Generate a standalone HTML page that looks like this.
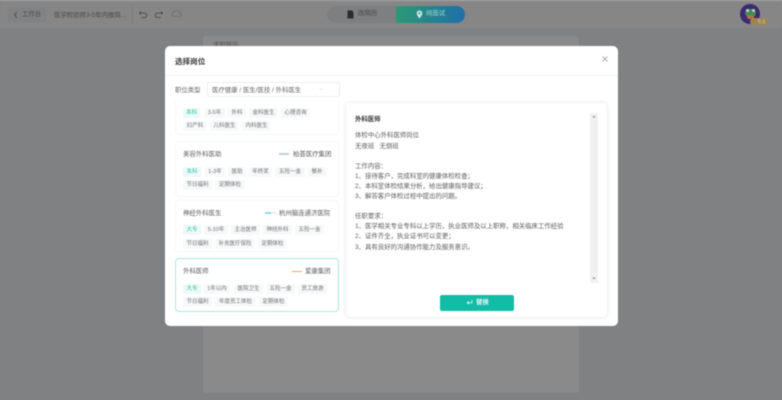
<!DOCTYPE html>
<html lang="zh">
<head>
<meta charset="utf-8">
<title>选择岗位</title>
<style>
*{margin:0;padding:0;box-sizing:border-box}
html,body{width:782px;height:400px;overflow:hidden;background:#808183}
body{position:relative;font-family:"Liberation Sans","Noto Sans CJK SC",sans-serif}
#w{position:absolute;inset:0;filter:blur(.4px)}
#w div,#w span,#w i,#w svg{position:absolute;display:block;white-space:nowrap;font-style:normal}
.tag{height:10px;line-height:11.500px;background:#f7f8f9;color:#707070;font-size:5.500px;text-align:center;border-radius:1.500px}
.g{background:#edf9f7;color:#2cc0ae}
.card{left:175px;width:164px;background:#fff;border:1px solid #f5f6f7;border-radius:4px}
.t{left:183px;font-size:6.400px;line-height:10px;color:#5c5c5c;margin-top:1px}
.co{font-size:6.400px;line-height:10px;color:#5c5c5c;margin-top:1px}
.l{left:355px;font-size:6.420px;line-height:10px;color:#5c5c5c;margin-top:1px}
</style>
</head>
<body>
<div id="w">
  <!-- top bar -->
  <div style="left:0;top:0;width:782px;height:1px;background:#a8a8a8"></div>
  <div style="left:0;top:1px;width:782px;height:27px;background:#868686"></div>
  <div style="left:8px;top:8px;width:38px;height:14px;background:#808283;border-radius:2px"></div>
  <svg style="left:13px;top:11px" width="5" height="8" viewBox="0 0 5 8"><path d="M4 1 1.500 4 4 7" fill="none" stroke="#444" stroke-width=".8"/></svg>
  <span style="left:22px;top:10px;font-size:6.400px;line-height:10px;color:#4a4a4a">工作台</span>
  <span style="left:54px;top:11px;font-size:6.400px;line-height:10px;color:#4a4a4a">医学检验师3-5年内推简...</span>
  <div style="left:132px;top:6px;width:1px;height:17px;background:#7a7a7a"></div>
  <svg style="left:138px;top:10px" width="10" height="9" viewBox="0 0 10 9"><path d="M3 1.500 1.500 3 3 4.500M1.500 3H6.500a2 2 0 0 1 0 4.500H3" fill="none" stroke="#444" stroke-width=".8"/></svg>
  <svg style="left:154px;top:10px" width="10" height="9" viewBox="0 0 10 9"><path d="M7 1.500 8.500 3 7 4.500M8.500 3H3.500a2 2 0 0 0 0 4.500H7" fill="none" stroke="#444" stroke-width=".8"/></svg>
  <svg style="left:171px;top:9px" width="11" height="10" viewBox="0 0 11 10"><path d="M3 7.500a2 2 0 0 1-.3-4A3 3 0 0 1 8.400 3.700 1.900 1.900 0 0 1 8.200 7.500H3Z" fill="none" stroke="#6a6a6a" stroke-width=".8"/></svg>

  <!-- switcher -->
  <div style="left:327px;top:6px;width:72px;height:17px;background:#7e7f81;border-radius:9px 0 0 9px"></div>
  <div style="left:396px;top:6px;width:69px;height:17px;background:linear-gradient(90deg,#2b9a74,#1f6eaa);border-radius:0 9px 9px 0"></div>
  <svg style="left:347px;top:10px" width="7" height="9" viewBox="0 0 7 9"><path d="M.5.500H5L6.500 2V8.500H.5Z" fill="#2c2c2c"/></svg>
  <span style="left:358px;top:9px;font-size:6.400px;line-height:10px;color:#444">改简历</span>
  <svg style="left:416px;top:10px" width="7" height="9" viewBox="0 0 7 9"><path d="M3.500.5A2.800 2.800 0 0 0 .7 3.300C.7 5.200 3.500 8.500 3.500 8.500S6.300 5.200 6.300 3.300A2.800 2.800 0 0 0 3.500.5Z" fill="#cfe8e4"/><circle cx="3.500" cy="3.300" r="1" fill="#2b8c84"/></svg>
  <span style="left:426px;top:9px;font-size:6.400px;line-height:10px;color:#9fd4cf">纯面试</span>

  <!-- avatar -->
  <div style="left:740px;top:4px;width:20px;height:20px;border-radius:50%;background:#3a2a74"></div>
  <div style="left:745px;top:9px;width:11px;height:8px;border-radius:4px;background:#3f8a5c"></div>
  <div style="left:746px;top:9px;width:3px;height:3px;border-radius:50%;background:#c8d8b0"></div>
  <div style="left:752px;top:9px;width:3px;height:3px;border-radius:50%;background:#c8d8b0"></div>
  <div style="left:747px;top:15px;width:7px;height:4px;border-radius:2px;background:#b4703a"></div>
  <div style="left:750px;top:18px;width:18px;height:7px;border-radius:4px;background:#9c8450"></div>
  <span style="left:757px;top:19px;font-size:4.500px;line-height:5px;color:#cfc09a">专业</span>

  <!-- paper -->
  <div style="left:203px;top:36px;width:376px;height:357px;background:#8a8a8a;border-radius:3px"></div>
  <span style="left:213px;top:41px;font-size:6.400px;line-height:10px;color:#555">求职简历</span>

  <!-- modal -->
  <div style="left:165px;top:46px;width:453px;height:280px;background:#fff;border-radius:5px"></div>
  <span style="left:175px;top:56px;font-size:7.600px;line-height:12px;font-weight:700;color:#3a3a3a">选择岗位</span>
  <svg style="left:602px;top:56px" width="6" height="6" viewBox="0 0 6 6"><path d="M.5.500 5.500 5.500M5.500.5.500 5.500" stroke="#888" stroke-width=".7"/></svg>
  <div style="left:165px;top:75px;width:453px;height:1px;background:#f3f3f3"></div>

  <span style="left:175px;top:86px;font-size:6.400px;line-height:10px;color:#666">职位类型</span>
  <div style="left:207px;top:82px;width:133px;height:15px;border:1px solid #eee;border-radius:2px"></div>
  <span style="left:212px;top:86px;font-size:6.400px;line-height:10px;color:#666">医疗健康 / 医生/医技 / 外科医生</span>
  <svg style="left:319px;top:87px" width="5" height="4" viewBox="0 0 5 4"><path d="M.5 1 2.500 3 4.500 1" fill="none" stroke="#ddd" stroke-width=".6"/></svg>

  <!-- card 1 (scrolled) -->
  <div class="card" style="top:100px;height:35px;border-top:0;border-radius:0 0 4px 4px"></div>
  <i class="tag g" style="left:183px;top:108px;width:17px">本科</i>
  <i class="tag" style="left:204px;top:108px;width:21px">3-5年</i>
  <i class="tag" style="left:228px;top:108px;width:18px">外科</i>
  <i class="tag" style="left:249px;top:108px;width:29px">金科医生</i>
  <i class="tag" style="left:281px;top:108px;width:29px">心理咨询</i>
  <i class="tag" style="left:183px;top:121px;width:24px">妇产科</i>
  <i class="tag" style="left:210px;top:121px;width:29px">儿科医生</i>
  <i class="tag" style="left:242px;top:121px;width:29px">内科医生</i>

  <!-- card 2 -->
  <div class="card" style="top:141px;height:56px"></div>
  <span class="t" style="top:149px">美容外科医助</span>
  <div style="left:279px;top:153px;width:10px;height:2px;background:#c0d0e0"></div>
  <span class="co" style="left:293px;top:149px">柏荟医疗集团</span>
  <i class="tag g" style="left:183px;top:167px;width:18px">本科</i>
  <i class="tag" style="left:205px;top:167px;width:20px">1-3年</i>
  <i class="tag" style="left:228px;top:167px;width:18px">医助</i>
  <i class="tag" style="left:249px;top:167px;width:23px">年终奖</i>
  <i class="tag" style="left:275px;top:167px;width:30px">五险一金</i>
  <i class="tag" style="left:308px;top:167px;width:18px">餐补</i>
  <i class="tag" style="left:183px;top:180px;width:29px">节日福利</i>
  <i class="tag" style="left:215px;top:180px;width:30px">定期体检</i>

  <!-- card 3 -->
  <div class="card" style="top:200px;height:52px"></div>
  <span class="t" style="top:208px">神经外科医生</span>
  <div style="left:265px;top:212px;width:12px;height:2px;background:linear-gradient(90deg,#8cdae6 50%,#e2f2f5 50%)"></div>
  <span class="co" style="left:279px;top:208px">杭州脑连通济医院</span>
  <i class="tag g" style="left:183px;top:225px;width:18px">大专</i>
  <i class="tag" style="left:204px;top:225px;width:24px">5-10年</i>
  <i class="tag" style="left:231px;top:225px;width:29px">主治医师</i>
  <i class="tag" style="left:263px;top:225px;width:29px">神经外科</i>
  <i class="tag" style="left:295px;top:225px;width:29px">五险一金</i>
  <i class="tag" style="left:183px;top:239px;width:29px">节日福利</i>
  <i class="tag" style="left:215px;top:239px;width:40px">补充医疗保险</i>
  <i class="tag" style="left:258px;top:239px;width:29px">定期体检</i>

  <!-- card 4 -->
  <div class="card" style="top:258px;height:54px;border:1px solid #a8e8df"></div>
  <span class="t" style="top:266px">外科医师</span>
  <div style="left:292px;top:271px;width:10px;height:1px;background:#f0a070"></div>
  <span class="co" style="left:305px;top:266px">爱康集团</span>
  <i class="tag g" style="left:183px;top:284px;width:18px">大专</i>
  <i class="tag" style="left:204px;top:284px;width:26px">1年以内</i>
  <i class="tag" style="left:234px;top:284px;width:29px">医院卫生</i>
  <i class="tag" style="left:266px;top:284px;width:29px">五险一金</i>
  <i class="tag" style="left:298px;top:284px;width:29px">员工旅游</i>
  <i class="tag" style="left:183px;top:297px;width:29px">节日福利</i>
  <i class="tag" style="left:215px;top:297px;width:41px">年度员工体检</i>
  <i class="tag" style="left:259px;top:297px;width:29px">定期体检</i>

  <!-- right panel -->
  <div style="left:346px;top:103px;width:261px;height:214px;background:#fff;border-radius:4px;box-shadow:0 0 5px rgba(0,0,0,.12)"></div>
  <span style="left:355px;top:115px;font-size:6.400px;line-height:10px;font-weight:700;color:#333">外科医师</span>
  <span class="l" style="top:130px">体检中心外科医师岗位</span>
  <span class="l" style="top:141px">无夜班&nbsp;&nbsp;&nbsp;无倒班</span>
  <span class="l" style="top:161px">工作内容：</span>
  <span class="l" style="top:171px">1、接待客户，完成科室的健康体检检查；</span>
  <span class="l" style="top:181px">2、本科室体检结果分析，给出健康指导建议；</span>
  <span class="l" style="top:191px">3、解答客户体检过程中提出的问题。</span>
  <span class="l" style="top:211px">任职要求：</span>
  <span class="l" style="top:221px">1、医学相关专业专科以上学历，执业医师及以上职称，相关临床工作经验</span>
  <span class="l" style="top:231px">2、证件齐全，执业证书可以变更；</span>
  <span class="l" style="top:242px">3、具有良好的沟通协作能力及服务意识。</span>
  <div style="left:590px;top:113px;width:8px;height:170px;background:#f1f1f1"></div>
  <svg style="left:592px;top:115px" width="4" height="3" viewBox="0 0 4 3"><path d="M2 .5 3.500 2.500H.5Z" fill="#888"/></svg>
  <svg style="left:592px;top:277px" width="4" height="3" viewBox="0 0 4 3"><path d="M2 2.500 3.500 .5H.5Z" fill="#888"/></svg>

  <div style="left:440px;top:295px;width:74px;height:16px;background:#12bca6;border-radius:2px"></div>
  <svg style="left:466px;top:299px" width="7" height="7" viewBox="0 0 7 7"><path d="M6 .8V3.800H1.200M2.800 2.200 1.200 3.800 2.800 5.400" fill="none" stroke="#dff6f3" stroke-width=".8"/></svg>
  <span style="left:476px;top:298px;font-size:6.400px;line-height:10px;font-weight:700;color:#dff6f3">替换</span>
</div>
</body>
</html>
